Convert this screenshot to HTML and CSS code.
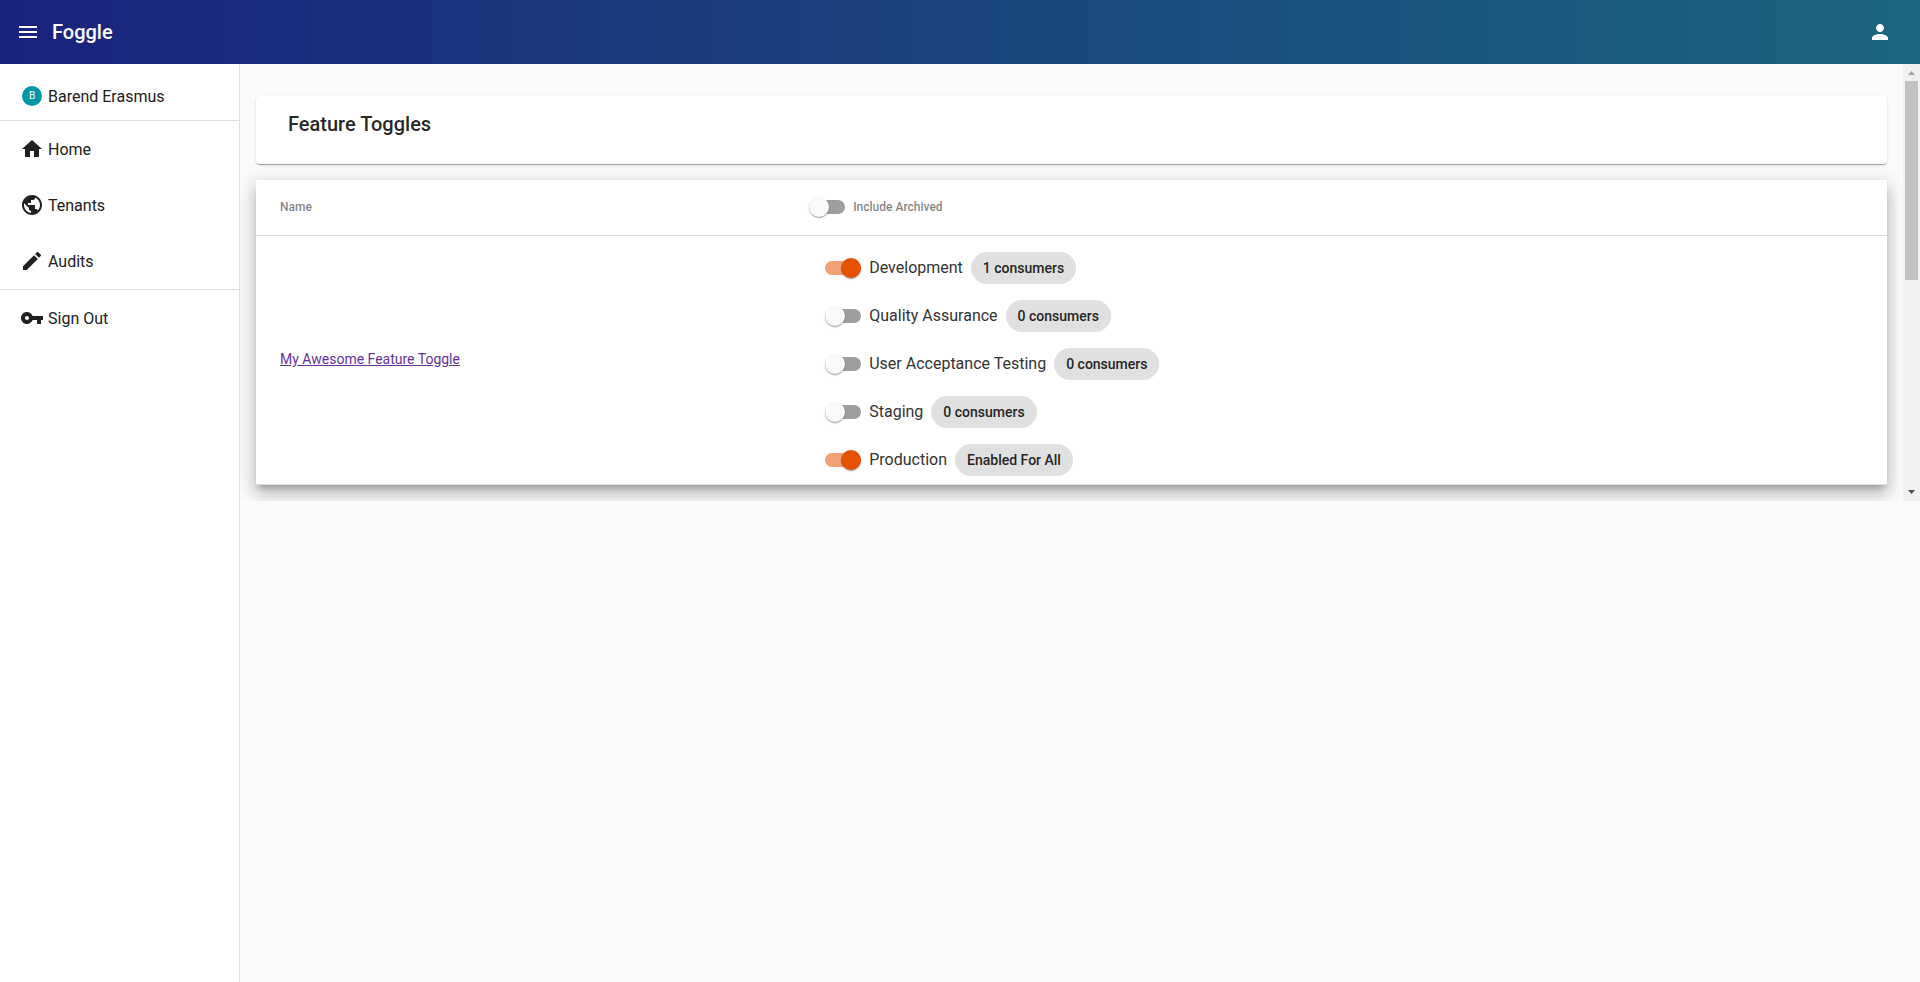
FILE: index.html
```
<!DOCTYPE html>
<html lang="en">
<head>
  <meta charset="UTF-8">
  <meta name="viewport" content="width=device-width, initial-scale=1.0">
  <title>Foggle</title>
  <link rel="stylesheet" href="styles.css">
</head>
<body>

  <header class="toolbar">
    <button type="button" class="icon-button" aria-label="Menu">
      <svg class="icon" viewBox="0 0 24 24"><path d="M3 18h18v-2H3v2zm0-5h18v-2H3v2zm0-7v2h18V6H3z"/></svg>
    </button>
    <span class="toolbar-title">Foggle</span>
    <button type="button" class="icon-button account" aria-label="Account">
      <svg class="icon" viewBox="0 0 24 24"><path d="M12 12c2.210 0 4-1.790 4-4s-1.790-4-4-4-4 1.790-4 4 1.790 4 4 4zm0 2c-2.670 0-8 1.340-8 4v2h16v-2c0-2.660-5.330-4-8-4z"/></svg>
    </button>
  </header>

  <div class="container">
    <!-- Side navigation -->
    <nav class="sidenav">
      <div class="nav-item user">
        <span class="avatar">B</span>
        <span>Barend Erasmus</span>
      </div>
      <hr class="divider">
      <a class="nav-item" href="#">
        <svg class="icon" viewBox="0 0 24 24"><path d="M10 20v-6h4v6h5v-8h3L12 3 2 12h3v8z"/></svg>
        <span>Home</span>
      </a>
      <a class="nav-item" href="#">
        <svg class="icon" viewBox="0 0 24 24"><path d="M12 2C6.480 2 2 6.480 2 12s4.480 10 10 10 10-4.480 10-10S17.520 2 12 2zm-1 17.930c-3.950-.49-7-3.850-7-7.930 0-.62.080-1.210.210-1.790L9 15v1c0 1.100.9 2 2 2v1.930zm6.900-2.540c-.26-.81-1-1.390-1.900-1.390h-1v-3c0-.55-.45-1-1-1H8v-2h2c.55 0 1-.45 1-1V7h2c1.100 0 2-.9 2-2v-.41c2.930 1.190 5 4.060 5 7.410 0 2.080-.8 3.970-2.100 5.390z"/></svg>
        <span>Tenants</span>
      </a>
      <a class="nav-item" href="#">
        <svg class="icon" viewBox="0 0 24 24"><path d="M3 17.250V21h3.750L17.810 9.940l-3.750-3.750L3 17.250zM20.710 7.040c.39-.39.39-1.020 0-1.410l-2.340-2.340c-.39-.39-1.020-.39-1.410 0l-1.830 1.830 3.750 3.750 1.830-1.830z"/></svg>
        <span>Audits</span>
      </a>
      <hr class="divider">
      <a class="nav-item" href="#">
        <svg class="icon" viewBox="0 0 24 24"><path d="M12.650 10C11.830 7.670 9.610 6 7 6c-3.310 0-6 2.690-6 6s2.690 6 6 6c2.610 0 4.830-1.670 5.650-4H17v4h4v-4h2v-4H12.650zM7 14c-1.100 0-2-.9-2-2s.9-2 2-2 2 .9 2 2-.9 2-2 2z"/></svg>
        <span>Sign Out</span>
      </a>
    </nav>

    <!-- Scrollable content -->
    <main class="content">
      <section class="card">
        <h1 class="card-title">Feature Toggles</h1>
      </section>

      <table class="feature-table">
        <thead>
          <tr>
            <th class="name-column">Name</th>
            <th>
              <label class="toggle"><input type="checkbox" class="switch"><span>Include Archived</span></label>
            </th>
          </tr>
        </thead>
        <tbody>
          <tr>
            <td><a class="feature-link" href="#">My Awesome Feature Toggle</a></td>
            <td>
              <ul class="environments">
                <li>
                  <label class="toggle"><input type="checkbox" class="switch" checked><span>Development</span></label>
                  <span class="chip">1 consumers</span>
                </li>
                <li>
                  <label class="toggle"><input type="checkbox" class="switch"><span>Quality Assurance</span></label>
                  <span class="chip">0 consumers</span>
                </li>
                <li>
                  <label class="toggle"><input type="checkbox" class="switch"><span>User Acceptance Testing</span></label>
                  <span class="chip">0 consumers</span>
                </li>
                <li>
                  <label class="toggle"><input type="checkbox" class="switch"><span>Staging</span></label>
                  <span class="chip">0 consumers</span>
                </li>
                <li>
                  <label class="toggle"><input type="checkbox" class="switch" checked><span>Production</span></label>
                  <span class="chip">Enabled For All</span>
                </li>
              </ul>
            </td>
          </tr>
        </tbody>
      </table>
    </main>

    <div class="scrollbar" aria-hidden="true">
      <svg class="scroll-arrow" viewBox="0 0 17 17"><path fill="#a3a3a3" d="M5 11h7L8.500 7z"/></svg>
      <div class="scroll-track">
        <div class="scroll-thumb"></div>
      </div>
      <svg class="scroll-arrow" viewBox="0 0 17 17"><path fill="#505050" d="M5 6h7l-3.500 4z"/></svg>
    </div>
  </div>

</body>
</html>
```
FILE: styles.css
```
* {
  box-sizing: border-box;
}

body {
  margin: 0;
  height: 100vh;
  display: flex;
  flex-direction: column;
  background: #fafafa;
  color: rgba(0, 0, 0, 0.87);
  font-family: Roboto, "Liberation Sans", sans-serif;
  font-size: 16px;
}

.icon {
  display: block;
  flex: none;
  width: 24px;
  height: 24px;
  fill: currentColor;
}

/* Toolbar */
.toolbar {
  display: flex;
  flex: none;
  align-items: center;
  height: 64px;
  padding: 0 28px 0 16px;
  background: linear-gradient(to right, #1a237e, #1a667e);
  color: #fff;
}

.icon-button {
  padding: 0;
  border: none;
  background: none;
  color: inherit;
  cursor: pointer;
}

.toolbar-title {
  margin-left: 12px;
  font-size: 20px;
  font-weight: 500;
}

.account {
  margin-left: auto;
}

.container {
  display: flex;
  flex: 1;
  align-items: flex-start;
  min-height: 0;
}

/* Side navigation */
.sidenav {
  flex: none;
  align-self: stretch;
  width: 240px;
  padding-top: 8px;
  border-right: 1px solid #e0e0e0;
  background: #fff;
}

.nav-item {
  display: flex;
  align-items: center;
  gap: 4px;
  height: 56px;
  padding: 0 20px;
  color: #212121;
  text-decoration: none;
}

.nav-item.user {
  height: 48px;
}

.avatar {
  width: 20px;
  height: 20px;
  margin: 0 2px;
  border-radius: 50%;
  background: #0097a7;
  color: #fff;
  font-size: 10px;
  line-height: 20px;
  text-align: center;
}

.divider {
  height: 1px;
  margin: 0;
  border: none;
  background: #e0e0e0;
}

/* Content */
.content {
  flex: 1;
  height: calc(50vh - 54px);
  padding: 32px 16px 16px;
  overflow: hidden;
}

/* Scrollbar */
.scrollbar {
  display: flex;
  flex: none;
  flex-direction: column;
  width: 17px;
  height: calc(50vh - 54px);
  background: #f1f1f1;
}

.scroll-arrow {
  display: block;
  flex: none;
  width: 17px;
  height: 17px;
}

.scroll-track {
  flex: 1;
  padding: 0 2px;
}

.scroll-thumb {
  height: 199px;
  background: #c1c1c1;
}

.card {
  margin-bottom: 16px;
  padding: 16px 32px 28px;
  border-radius: 4px;
  background: #fff;
  box-shadow: 0 2px 1px -1px rgba(0, 0, 0, 0.2), 0 1px 1px 0 rgba(0, 0, 0, 0.14), 0 1px 3px 0 rgba(0, 0, 0, 0.12);
}

.card-title {
  margin: 0;
  font-size: 20px;
  font-weight: 500;
  line-height: 24px;
}

/* Table */
.feature-table {
  width: 100%;
  border-spacing: 0;
  table-layout: fixed;
  background: #fff;
  box-shadow: 0 6px 6px -3px rgba(0, 0, 0, 0.2), 0 10px 14px 1px rgba(0, 0, 0, 0.14), 0 4px 18px 3px rgba(0, 0, 0, 0.12);
}

.feature-table th,
.feature-table td {
  padding: 0 15px 2px;
  border-bottom: 1px solid #e0e0e0;
  font-size: 14px;
  text-align: left;
}

.feature-table th:first-child,
.feature-table td:first-child {
  padding-left: 24px;
}

.feature-table th {
  height: 56px;
  color: rgba(0, 0, 0, 0.5);
  font-size: 12px;
  font-weight: 500;
}

.name-column {
  width: 33%;
}

.feature-link {
  color: #65319a;
}

.environments {
  margin: 0;
  padding: 8px 0 0 16px;
  list-style: none;
}

.environments li {
  display: flex;
  align-items: center;
  gap: 8px;
  height: 48px;
  color: #333;
  font-size: 16px;
}

.environments li:last-child {
  height: 46px;
  padding-top: 2px;
}

.chip {
  padding: 0 12px;
  border-radius: 16px;
  background: #e0e0e0;
  color: #262626;
  font-size: 14px;
  font-weight: 500;
  line-height: 32px;
}

/* Slide toggle */
.toggle {
  display: flex;
  align-items: center;
  gap: 8px;
  line-height: 24px;
  cursor: pointer;
}

.switch {
  display: flex;
  align-items: center;
  appearance: none;
  width: 36px;
  height: 14px;
  margin: 0;
  border-radius: 8px;
  background: #9e9e9e;
  cursor: pointer;
}

.switch::before {
  content: "";
  flex: none;
  width: 20px;
  height: 20px;
  border-radius: 50%;
  background: #fafafa;
  box-shadow: 0 2px 1px -1px rgba(0, 0, 0, 0.2), 0 1px 1px 0 rgba(0, 0, 0, 0.14), 0 1px 3px 0 rgba(0, 0, 0, 0.12);
}

.switch:checked {
  justify-content: flex-end;
  background: #f2a177;
}

.switch:checked::before {
  background: #e65100;
}
```
